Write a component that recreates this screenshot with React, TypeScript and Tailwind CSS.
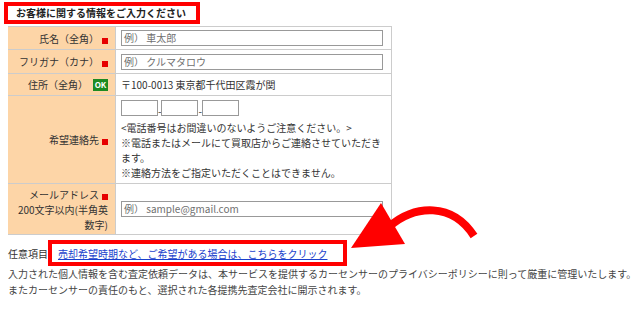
import React from "react";

const Req = () => (
  <span className="inline-block w-[6px] h-[6px] bg-[#e60000] ml-[3px] translate-y-[1px]"></span>
);

const Row = ({ label, height, children }: any) => (
  <div className={`flex border-b border-[#cccccc] ${height}`}>
    <div className="w-[108px] shrink-0 bg-[#fdd5a7] border-r border-[#cccccc] pr-[7px] flex items-center justify-end text-right">
      {label}
    </div>
    <div className="flex-1 pl-[5px] flex items-center">{children}</div>
  </div>
);

const TextInput = ({ placeholder }: any) => (
  <div className="w-[262px] h-[16px] border border-[#999999] pl-[2px] leading-[14px] text-[#6f6f6f]">
    {placeholder}
  </div>
);

const PhoneBox = () => (
  <span className="inline-block w-[37px] h-[16px] border border-[#999999] bg-white"></span>
);

export default function App() {
  return (
    <div className="relative w-[641px] h-[310px] overflow-hidden bg-white text-[10px] text-[#333333] font-['Noto_Sans_CJK_JP','Noto_Sans',sans-serif]">
      <div className="pt-[2px] pl-[4px]">
        <div className="w-[196px] h-[22px] border-4 border-[#ff0000] pl-[8px] font-bold leading-[14px] text-[#222222]">
          お客様に関する情報をご入力ください
        </div>
      </div>

      <div className="ml-[8px] mt-[2px] w-[384px] border-t border-r border-[#cccccc]">
        <Row
          height="h-[23px]"
          label={
            <span className="whitespace-nowrap">
              氏名（全角）
              <Req />
            </span>
          }
        >
          <TextInput placeholder="例） 車太郎" />
        </Row>
        <Row
          height="h-[24px]"
          label={
            <span className="whitespace-nowrap">
              フリガナ（カナ）
              <Req />
            </span>
          }
        >
          <TextInput placeholder="例） クルマタロウ" />
        </Row>
        <Row
          height="h-[22px]"
          label={
            <span className="whitespace-nowrap flex items-center">
              住所（全角）
              <span className="ml-[5px] inline-flex items-center justify-center w-[15px] h-[12px] bg-[#1d8a22] text-white font-bold text-[8px] leading-none">
                OK
              </span>
            </span>
          }
        >
          <span className="whitespace-nowrap">〒100-0013 東京都千代田区霞が関</span>
        </Row>
        <Row
          height="h-[88px]"
          label={
            <span className="whitespace-nowrap">
              希望連絡先
              <Req />
            </span>
          }
        >
          <div className="self-start pt-[4px] leading-[15px] whitespace-nowrap">
            <div className="flex items-end h-[16px] mb-[4px] leading-[10px]">
              <PhoneBox />
              <span>-</span>
              <PhoneBox />
              <span>-</span>
              <PhoneBox />
            </div>
            <div>&lt;電話番号はお間違いのないようご注意ください。&gt;</div>
            <div>※電話またはメールにて買取店からご連絡させていただき</div>
            <div>ます。</div>
            <div>※連絡方法をご指定いただくことはできません。</div>
          </div>
        </Row>
        <Row
          height="h-[51px]"
          label={
            <span className="whitespace-nowrap leading-[15px]">
              メールアドレス
              <Req />
              <br />
              200文字以内(半角英
              <br />
              数字)
            </span>
          }
        >
          <TextInput placeholder="例） sample@gmail.com" />
        </Row>
      </div>

      <div className="flex items-center pl-[8px] mt-[5px]">
        <span>任意項目</span>
        <div className="w-[299px] h-[26px] border-4 border-[#ff0000] pl-[6px] flex items-center">
          <a href="#" className="text-[#1a3fcc] underline whitespace-nowrap">
            売却希望時期など、ご希望がある場合は、こちらをクリック
          </a>
        </div>
      </div>

      <div className="pl-[8px] leading-[16px] text-[#444444] whitespace-nowrap">
        <p>入力された個人情報を含む査定依頼データは、本サービスを提供するカーセンサーのプライバシーポリシーに則って厳重に管理いたします。</p>
        <p>またカーセンサーの責任のもと、選択された各提携先査定会社に開示されます。</p>
      </div>

      <svg
        className="absolute left-0 top-0 pointer-events-none"
        width="641"
        height="310"
        viewBox="0 0 641 310"
      >
        <path
          d="M 390 226 C 415 205, 452 202, 474 236"
          fill="none"
          stroke="#ff0000"
          strokeWidth="8"
        />
        <polygon points="351,248 381,203 405,244" fill="#ff0000" />
      </svg>
    </div>
  );
}
